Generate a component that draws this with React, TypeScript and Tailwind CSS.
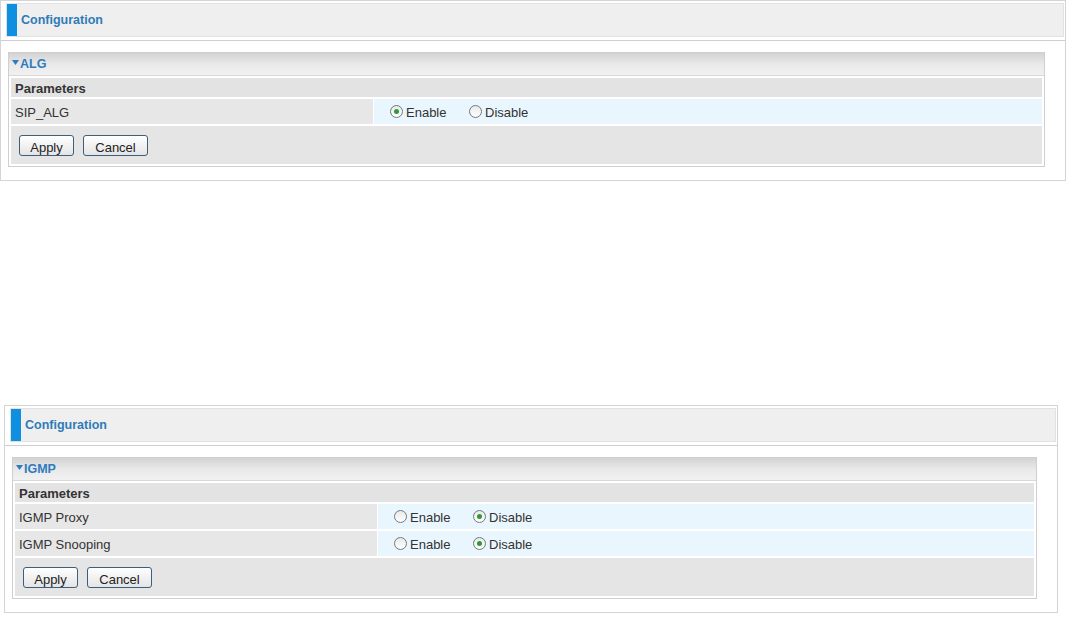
import React, { useState } from 'react';

type Row = { label: string; name: string; value: 'enable' | 'disable' };

const Radio: React.FC<{ checked: boolean; label: string; onClick: () => void }> = ({ checked, label, onClick }) => (
  <label className="flex items-center gap-[3px] cursor-pointer" onClick={onClick}>
    <span className="w-[13px] h-[13px] rounded-full border border-[#6f7a80] bg-gradient-to-b from-[#e9e9e9] to-white flex items-center justify-center">
      {checked && <span className="w-[5px] h-[5px] rounded-full bg-[#2f9a35]" />}
    </span>
    <span className="pt-[2px]">{label}</span>
  </label>
);

const Panel: React.FC<{ title: string; rows: Row[] }> = ({ title, rows }) => {
  const [values, setValues] = useState<Record<string, string>>(
    Object.fromEntries(rows.map((r) => [r.name, r.value]))
  );

  return (
    <div className="border border-[#d4d4d4] bg-white pb-[13px]">
      <div className="mt-[2px] ml-[5px] mr-[1px] h-[34px] flex items-center bg-[#efefef] border border-[#e2e2e2]">
        <div className="w-[10px] h-full bg-[#0f8fe0]" />
        <span className="ml-[4px] pt-[1px] text-[12.5px] font-semibold text-[#2f7bb8]">Configuration</span>
      </div>
      <div className="mt-[3px] h-[1px] bg-[#cfcfcf]" />
      <div className="mt-[11px] ml-[7px] mr-[20px] border border-[#cfcfcf]">
        <div className="h-[23px] flex items-center pl-[3px] bg-gradient-to-b from-[#d3d3d3] via-[#e9e9e9] to-[#f1f1f1] border-b border-[#d8d8d8]">
          <svg width="7" height="5" viewBox="0 0 7 5" className="mr-[1px] mb-[3px]">
            <path d="M0 0 L7 0 L3.5 5 Z" fill="#2f7bc0" />
          </svg>
          <span className="text-[12.5px] font-bold text-[#2f7bc0]">{title}</span>
        </div>
        <div className="p-[2px] flex flex-col gap-[2px]">
          <div className="h-[19px] flex items-center pl-[4px] pt-[3px] bg-[#e3e3e3] font-bold text-[#333]">Parameters</div>
          {rows.map((r) => (
            <div key={r.name} className="h-[25px] flex gap-[1px]">
              <div className="w-[362px] flex items-center pl-[4px] pt-[3px] bg-[#e7e7e7] text-[#333]">{r.label}</div>
              <div className="flex-1 flex items-center pl-[16px] bg-[#eaf6fe] text-[#333]">
                <div className="w-[79px]">
                  <Radio
                    checked={values[r.name] === 'enable'}
                    label="Enable"
                    onClick={() => setValues({ ...values, [r.name]: 'enable' })}
                  />
                </div>
                <Radio
                  checked={values[r.name] === 'disable'}
                  label="Disable"
                  onClick={() => setValues({ ...values, [r.name]: 'disable' })}
                />
              </div>
            </div>
          ))}
          <div className="h-[38px] flex items-center gap-[9px] pl-[8px] pt-[1px] bg-[#e5e5e5]">
            <button className="w-[55px] h-[21px] pt-[2px] rounded-[3px] border border-[#3d5f7c] bg-gradient-to-b from-white to-[#e4e4e4] text-[#222]">
              Apply
            </button>
            <button className="w-[65px] h-[21px] pt-[2px] rounded-[3px] border border-[#3d5f7c] bg-gradient-to-b from-white to-[#e4e4e4] text-[#222]">
              Cancel
            </button>
          </div>
        </div>
      </div>
    </div>
  );
};

const App: React.FC = () => {
  return (
    <div className="w-[1066px] h-[621px] bg-white text-[13px] font-['Liberation_Sans',Arial,sans-serif] overflow-hidden">
      <Panel title="ALG" rows={[{ label: 'SIP_ALG', name: 'sip', value: 'enable' }]} />
      <div className="mt-[224px] ml-[4px] w-[1054px]">
        <Panel
          title="IGMP"
          rows={[
            { label: 'IGMP Proxy', name: 'proxy', value: 'disable' },
            { label: 'IGMP Snooping', name: 'snoop', value: 'disable' },
          ]}
        />
      </div>
    </div>
  );
};

export default App;
